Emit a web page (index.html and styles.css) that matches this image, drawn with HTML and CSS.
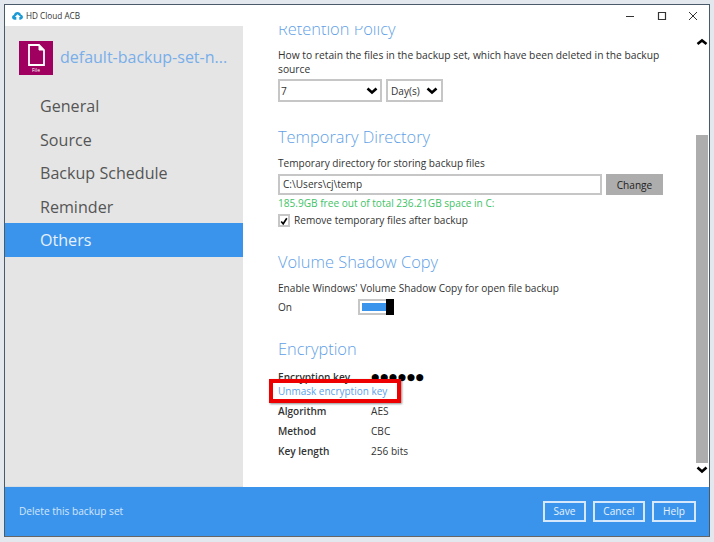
FILE: index.html
```html
<!DOCTYPE html>
<html lang="en">
<head>
<meta charset="utf-8">
<title>HD Cloud ACB</title>
<link rel="stylesheet" href="styles.css">
</head>
<body>
<div class="window">
  <header class="titlebar">
    <div class="app">
      <svg class="cloud" width="11" height="8" viewBox="0 0 15 11"><path d="M3.500 10.500C1.500 10.500 0 9.200 0 7.300 0 5.700 1.100 4.500 2.600 4.200 3.100 1.800 5 0 7.500 0c2.300 0 4.200 1.500 4.800 3.700 1.600.2 2.700 1.600 2.700 3.300 0 2-1.500 3.500-3.500 3.500h-1.500V7h2L7.500 3 3.900 7h2v3.500z" fill="#1c9ad6"/></svg>
      <span>HD Cloud ACB</span>
    </div>
    <div class="controls">
      <svg width="12" height="12" viewBox="0 0 12 12"><path d="M2 6.500h8" stroke="#333" fill="none"/></svg>
      <svg width="12" height="12" viewBox="0 0 12 12"><path d="M2.500 2.500h7v7h-7z" stroke="#333" fill="none" stroke-width="1.200"/></svg>
      <svg width="12" height="12" viewBox="0 0 12 12"><path d="M2 2l8 8M10 2l-8 8" stroke="#333" fill="none"/></svg>
    </div>
  </header>
  <div class="main">
    <aside class="sidebar">
      <div class="set">
        <div class="set-icon">
          <svg width="17" height="22" viewBox="0 0 17 22"><path d="M1 1h10l5 5v15H1z" fill="#a0005f" stroke="#fff" stroke-width="1.800"/><path d="M11 1v5h5" fill="#fff" stroke="#fff"/></svg>
          <span class="set-label">File</span>
        </div>
        <span class="set-name">default-backup-set-n...</span>
      </div>
      <nav class="nav">
        <a class="nav-item">General</a>
        <a class="nav-item">Source</a>
        <a class="nav-item">Backup Schedule</a>
        <a class="nav-item">Reminder</a>
        <a class="nav-item active">Others</a>
      </nav>
    </aside>
    <section class="content">
      <div class="scroll">
        <h2 class="heading first">Retention Policy</h2>
        <p class="text retain">How to retain the files in the backup set, which have been deleted in the backup source</p>
        <div class="selects">
          <div class="select wide"><span>7</span><svg class="chev" width="12" height="8" viewBox="0 0 12 8"><path d="M1.500 1.500L6 5.500l4.500-4" stroke="#000" stroke-width="2.600" fill="none"/></svg></div>
          <div class="select narrow"><span>Day(s)</span><svg class="chev" width="12" height="8" viewBox="0 0 12 8"><path d="M1.500 1.500L6 5.500l4.500-4" stroke="#000" stroke-width="2.600" fill="none"/></svg></div>
        </div>
        <h2 class="heading temp">Temporary Directory</h2>
        <p class="text label">Temporary directory for storing backup files</p>
        <div class="path-row">
          <div class="path">C:\Users\cj\temp</div>
          <button class="change">Change</button>
        </div>
        <p class="text free">185.9GB free out of total 236.21GB space in C:</p>
        <div class="check-row">
          <span class="check"><svg width="10" height="10" viewBox="0 0 10 10"><path d="M1.500 5.500L4 8.500 8.500 1.500" stroke="#000" stroke-width="2" fill="none"/></svg></span>
          <span class="text">Remove temporary files after backup</span>
        </div>
        <h2 class="heading vss">Volume Shadow Copy</h2>
        <p class="text label">Enable Windows' Volume Shadow Copy for open file backup</p>
        <div class="toggle-row">
          <span class="text on">On</span>
          <span class="toggle"><span class="toggle-fill"></span><span class="toggle-knob"></span></span>
        </div>
        <h2 class="heading enc">Encryption</h2>
        <div class="kv key-row"><span class="k">Encryption key</span><span class="dots">●●●●●●</span></div>
        <a class="unmask">Unmask encryption key</a>
        <div class="kv algo"><span class="k">Algorithm</span><span class="v">AES</span></div>
        <div class="kv"><span class="k">Method</span><span class="v">CBC</span></div>
        <div class="kv"><span class="k">Key length</span><span class="v">256 bits</span></div>
      </div>
      <div class="scrollbar">
        <svg class="sb-chev" width="12" height="8" viewBox="0 0 12 8"><path d="M1.500 6L6 2.500 10.500 6" stroke="#000" stroke-width="2.600" fill="none"/></svg>
        <div class="thumb"></div>
        <svg class="sb-chev" width="12" height="8" viewBox="0 0 12 8"><path d="M1.500 1.500L6 5.500l4.500-4" stroke="#000" stroke-width="2.600" fill="none"/></svg>
      </div>
      <div class="highlight"></div>
    </section>
  </div>
  <footer class="footer">
    <a class="delete">Delete this backup set</a>
    <div class="buttons">
      <button class="btn save">Save</button>
      <button class="btn cancel">Cancel</button>
      <button class="btn help">Help</button>
    </div>
  </footer>
</div>
</body>
</html>
```
FILE: styles.css
```css
* { box-sizing: border-box; }
html, body { margin: 0; height: 100%; }
body {
  width: 714px;
  height: 542px;
  overflow: hidden;
  background: #e3e8ee;
  padding: 4px 4px 5px 4px;
  font-family: "Open Sans", "Liberation Sans", sans-serif;
  color: #333;
}
.window {
  width: 706px;
  height: 533px;
  border: 1px solid #4b5a6b;
  border-bottom-color: #666;
  background: #fff;
  display: flex;
  flex-direction: column;
}
.titlebar {
  height: 21px;
  flex: none;
  display: flex;
  justify-content: space-between;
  align-items: center;
  padding-left: 7px;
  padding-right: 10px;
  background: #fff;
}
.app { display: flex; align-items: center; gap: 3px; font-size: 8.200px; color: #333; }
.cloud { flex: none; }
.controls { display: flex; gap: 19.500px; }
.main { flex: 1; display: flex; min-height: 0; }
.sidebar { width: 238px; flex: none; background: #e5e5e5; border-bottom: 1px solid #d5dce2; }
.set { display: flex; align-items: center; padding: 14px 0 0 14px; gap: 7px; }
.set-icon {
  width: 34px; height: 34px; flex: none; background: #a0005f;
  display: flex; flex-direction: column; align-items: center; padding-top: 3px;
}
.set-icon svg { display: block; }
.set-label { font-size: 5px; line-height: 6px; color: #fff; margin-top: 1px; }
.set-name { font-size: 16px; line-height: 35px; color: #78aeea; white-space: nowrap; }
.nav { display: flex; flex-direction: column; margin-top: 14px; }
.nav-item {
  height: 33.500px; line-height: 35px; padding-left: 35px;
  font-size: 16.100px; color: #555;
}
.nav-item.active { background: #3b94ec; color: #e6f1fd; }
.content { flex: 1; position: relative; display: flex; overflow: hidden; background: #fff; min-width: 0; }
.scroll { flex: 1; padding-left: 35px; padding-right: 30px; min-width: 0; }
.heading { font-weight: 300; font-size: 16.400px; line-height: 24px; margin: 0; color: #5f9fe6; white-space: nowrap; }
.heading.first { margin-top: -9px; }
.text { font-size: 10.100px; line-height: 15px; margin: 0; color: #333; }
.retain { margin-top: 7px; width: 400px; font-size: 10.250px; line-height: 14px; }
.selects { display: flex; gap: 4px; margin-top: 3px; }
.select {
  height: 23px; border: 2px solid #c6c6c6; background: #fff;
  display: flex; justify-content: space-between; align-items: center;
  font-size: 10.100px; padding: 0 2px 0 1px;
}
.select.wide { width: 104px; }
.select.narrow { width: 57px; padding: 0 3px; }
.chev { flex: none; }
.temp { margin-top: 23px; }
.label { margin-top: 7px; }
.path-row { display: flex; gap: 4px; margin-top: 3px; height: 21px; }
.path {
  width: 324px; flex: none; border: 2px solid #c6c6c6;
  font-size: 10.100px; line-height: 17px; padding-left: 3px;
}
.change {
  width: 57px; flex: none; background: #adadad; border: 0; padding: 0;
  font: 10.100px "Open Sans", sans-serif; color: #222;
}
.free { color: #3fc368; margin-top: 1px; line-height: 14px; }
.check-row { display: flex; align-items: center; gap: 4px; margin-top: 3px; }
.check {
  width: 12px; height: 13px; border: 2px solid #c6c6c6;
  display: flex; align-items: center; justify-content: center; flex: none;
}
.vss { margin-top: 22px; }
.toggle-row { display: flex; align-items: center; margin-top: 2px; height: 18px; }
.on { width: 80px; }
.toggle {
  position: relative; width: 36px; height: 16px; border: 2px solid #c6c6c6; display: block;
}
.toggle-fill { position: absolute; left: 2px; top: 2px; width: 26px; height: 8px; background: #3b94ec; }
.toggle-knob { position: absolute; right: -2px; top: -2px; width: 8px; height: 16px; background: #000; }
.enc { margin-top: 21px; }
.kv { display: flex; font-size: 10.100px; line-height: 15px; height: 20px; }
.key-row { height: 14px; margin-top: 9px; }
.k { width: 93px; flex: none; color: #333; font-weight: 600; }
.v { color: #333; }
.dots { font-size: 9.300px; letter-spacing: .8px; line-height: 13px; color: #000; font-family: "DejaVu Sans", sans-serif; }
.unmask { display: block; font-size: 10px; line-height: 14px; color: #5a9fea; }
.algo { margin-top: 6px; }
.scrollbar { width: 12px; flex: none; display: flex; flex-direction: column; align-items: center; margin-right: 1px; padding-top: 12px; }
.thumb { width: 12px; height: 328px; background: #adadad; margin-top: 89px; }
.sb-chev { flex: none; }
.scrollbar .sb-chev:last-child { margin-top: 3px; }
.highlight {
  position: absolute; left: 26px; top: 353px; width: 132px; height: 24px;
  border: 4px solid #ee0000; box-shadow: 1px 1px 2px rgba(0,0,0,.45);
}
.footer {
  height: 49px; flex: none; background: #3b94ec;
  display: flex; justify-content: space-between; align-items: center;
  padding: 0 13px 1px 14px;
}
.delete { font-size: 10.150px; color: #d3e6fb; }
.buttons { display: flex; gap: 7px; }
.btn {
  height: 21px; background: transparent; border: 2px solid #d6e8fb; padding: 0;
  font: 10.150px "Open Sans", sans-serif; color: #e8f2fd;
}
.save { width: 43px; }
.cancel { width: 52px; }
.help { width: 44px; }
```
